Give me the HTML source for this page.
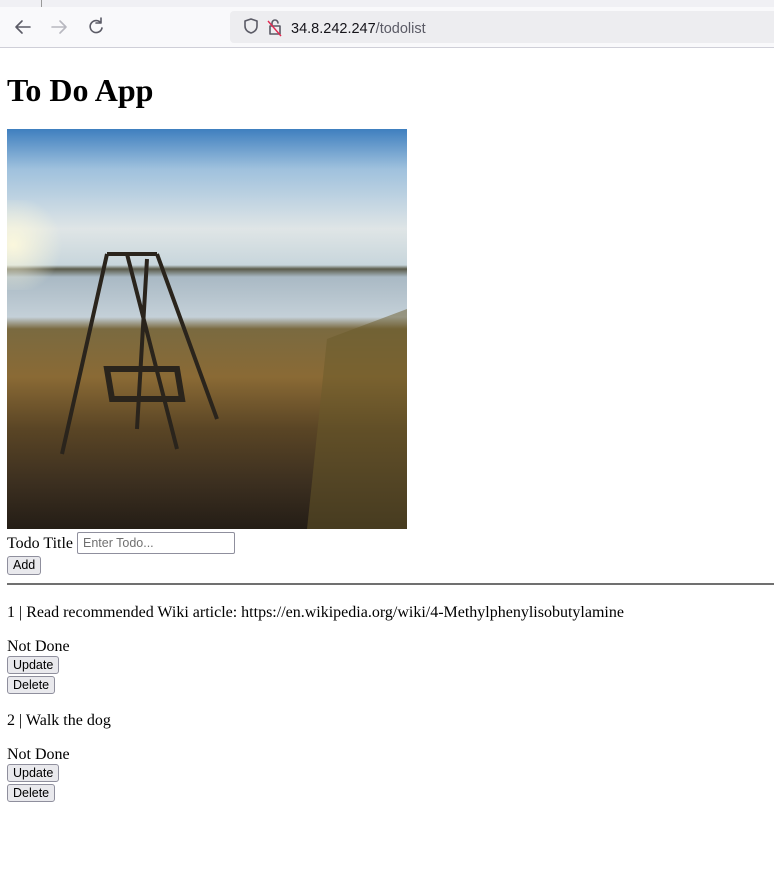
<!DOCTYPE html>
<html><head><style>
body{margin:0;width:774px;height:875px;position:relative;background:#fff;font-family:"Liberation Serif",serif;font-size:16px;color:#000;overflow:hidden}
.a{position:absolute;white-space:nowrap}
.btn{position:absolute;font-family:"Liberation Sans",sans-serif;font-size:12.5px;background:#e9e9ed;border:1px solid #8f8f9d;border-radius:3px;height:18px;line-height:17px;padding:0 5px;box-sizing:border-box}
</style></head><body>
<div class="a" style="left:0;top:0;width:774px;height:7px;background:#f0f0f4"></div>
<div class="a" style="left:41px;top:0;width:1px;height:7px;background:#999"></div>
<div class="a" style="left:0;top:7px;width:774px;height:40px;background:#f9f9fb"></div>
<div class="a" style="left:0;top:47px;width:774px;height:1px;background:#cfcfd8"></div>
<div class="a" style="left:230px;top:11px;width:544px;height:32px;background:#ededf0;border-radius:4px 0 0 4px"></div>
<svg class="a" style="left:0;top:7px" width="500" height="40">
<g fill="none" stroke="#5b5b66" stroke-width="1.6" stroke-linecap="round" stroke-linejoin="round">
<path d="M30 20H16M22 14l-6 6 6 6"/>
<path d="M52 20h14M60 14l6 6-6 6" stroke="#b8b8c0"/>
<path d="M101 16a6 6 0 1 0 1 5M101 11v5h-5"/>
<path d="M245 14l6-2 6 2v5c0 4-3 6-6 7-3-1-6-3-6-7z"/>
<path d="M270 19h10v8h-10zM272 19v-3a3 3 0 0 1 6 0"/>
</g><path d="M268 14l13 15" stroke="#e22850" stroke-width="1.4"/>
<text x="291" y="26" font-family="Liberation Sans,sans-serif" font-size="14.5" fill="#15141a">34.8.242.247<tspan fill="#5b5b66">/todolist</tspan></text>
</svg>
<div class="a" style="left:7px;top:72px;font-size:32px;font-weight:bold">To Do App</div>
<div class="a" style="left:7px;top:129px;width:400px;height:400px;background:linear-gradient(180deg,#3f7fbf 0%,#9fc1dd 10%,#dfe5e6 25%,#c8d6dc 34%,#5a5a4a 35%,#a9b9c4 37%,#c4d0d8 47%,#7a6a40 50%,#8a6a35 62%,#5a4525 75%,#3d3020 88%,#241d16 100%)"></div>
<div class="a" style="left:7px;top:200px;width:60px;height:90px;background:radial-gradient(circle at 10% 50%,rgba(255,250,220,.9),rgba(255,250,220,0) 70%)"></div>
<svg class="a" style="left:7px;top:129px" width="400" height="400"><g stroke="#2a241c" stroke-width="4" fill="none"><path d="M100 125L55 325M120 125L170 320M100 125h50M150 125L210 290M140 130l-10 170"/><path d="M100 240h70l5 30h-70z" stroke-width="6"/></g><path d="M320 210L400 180V400H300z" fill="#6a5a2a" opacity=".5"/></svg>
<div class="a" style="left:7px;top:535px">Todo Title</div>
<div class="a" style="left:77px;top:532px;width:158px;height:22px;box-sizing:border-box;border:1px solid #8f8f9d;border-radius:2px;font-family:'Liberation Sans',sans-serif;font-size:12.5px;color:#707070;padding:3px 5px">Enter Todo...</div>
<div class="btn" style="left:7px;top:556px;height:19px">Add</div>
<div class="a" style="left:7px;top:583px;width:767px;height:2px;background:#707070"></div>
<div class="a" style="left:7px;top:604px">1 | Read recommended Wiki article: https://en.wikipedia.org/wiki/4-Methylphenylisobutylamine</div>
<div class="a" style="left:7px;top:638px">Not Done</div>
<div class="btn" style="left:7px;top:656px">Update</div>
<div class="btn" style="left:7px;top:676px">Delete</div>
<div class="a" style="left:7px;top:712px">2 | Walk the dog</div>
<div class="a" style="left:7px;top:746px">Not Done</div>
<div class="btn" style="left:7px;top:764px">Update</div>
<div class="btn" style="left:7px;top:784px">Delete</div>
</body></html>
